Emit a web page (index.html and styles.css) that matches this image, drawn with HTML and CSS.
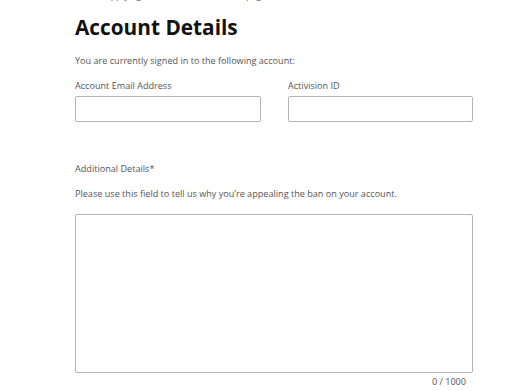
FILE: index.html
```html
<!DOCTYPE html>
<html>
<head>
<meta charset="utf-8">
<link rel="stylesheet" href="styles.css">
</head>
<body>
<div class="page">
  <p class="cut">Before applying for a ban review on this page</p>
  <h1 class="title">Account Details</h1>
  <p class="text intro">You are currently signed in to the following account:</p>
  <div class="row">
    <div class="field">
      <label class="label">Account Email Address</label>
      <div class="input"></div>
    </div>
    <div class="field">
      <label class="label">Activision ID</label>
      <div class="input"></div>
    </div>
  </div>
  <p class="text extra">Additional Details*</p>
  <p class="text hint">Please use this field to tell us why you’re appealing the ban on your account.</p>
  <div class="area"></div>
  <div class="counter">0 / 1000</div>
</div>
</body>
</html>
```
FILE: styles.css
```css
html, body {
  margin: 0;
  padding: 0;
  background: #fff;
}
body {
  font-family: "Open Sans", "Liberation Sans", sans-serif;
  color: #555;
}
.page {
  width: 398px;
  padding-left: 75px;
  overflow: hidden;
}
.cut {
  margin: -11px 0 0;
  font-size: 9.1px;
  line-height: 14px;
  color: #555;
  white-space: nowrap;
}
.title {
  margin: 9px 0 0;
  font-size: 20.8px;
  line-height: 30px;
  font-weight: 700;
  color: #111;
}
.text {
  margin: 0;
  font-size: 9.1px;
  line-height: 14px;
}
.intro {
  margin-top: 12px;
}
.row {
  display: flex;
  gap: 27px;
  margin-top: 11px;
}
.field {
  display: flex;
  flex-direction: column;
  width: 186px;
}
.field + .field {
  width: 185px;
}
.label {
  font-size: 9.1px;
  line-height: 14px;
  margin-bottom: 3px;
}
.input {
  height: 24px;
  border: 1px solid #b5b5b5;
  border-radius: 2px;
}
.extra {
  margin-top: 40px;
}
.hint {
  margin-top: 11px;
}
.area {
  margin-top: 13px;
  height: 157px;
  border: 1px solid #b5b5b5;
  border-radius: 2px;
}
.counter {
  margin-top: 2px;
  text-align: right;
  padding-right: 7px;
  font-size: 9.1px;
  line-height: 14px;
}
```
